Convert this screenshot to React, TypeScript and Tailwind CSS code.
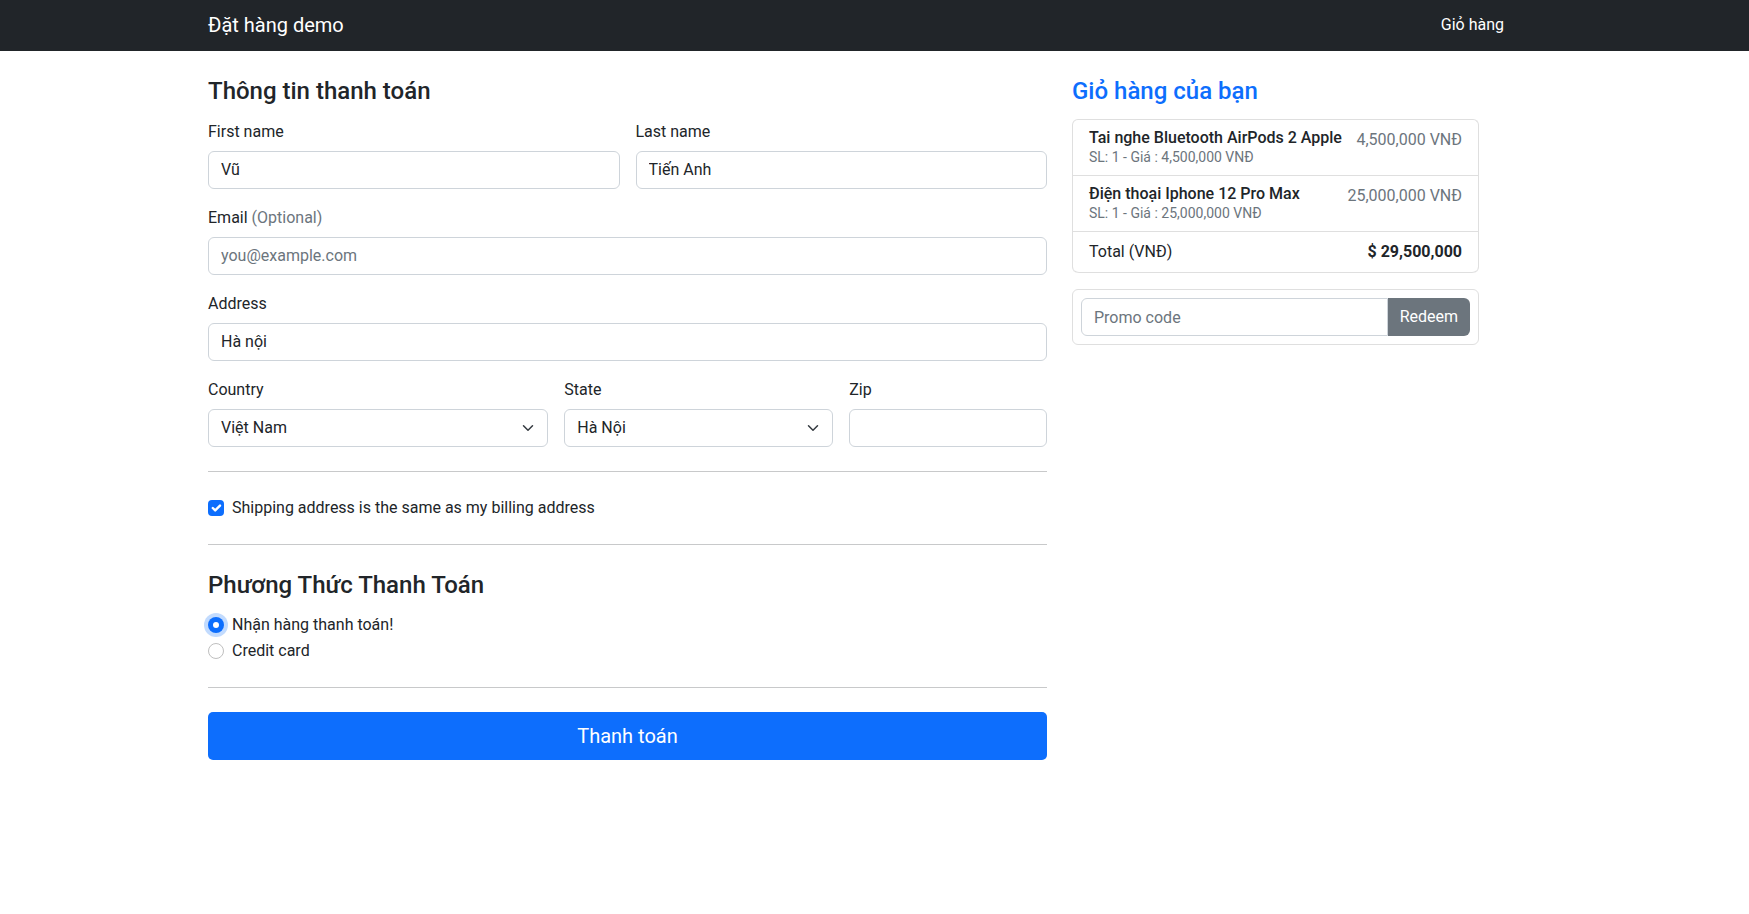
import { FC, ReactNode } from 'react'

const inputCls =
  'block w-full h-[38px] rounded-[6px] border border-[#ced4da] bg-white px-3 text-base text-[#212529] placeholder:text-[#6c757d] outline-none'

interface FieldProps {
  label: ReactNode
  children: ReactNode
  className?: string
}

const Field: FC<FieldProps> = ({ label, children, className }) => (
  <div className={className}>
    <label className="mb-[7px] block pt-px text-base leading-6 text-[#212529]">{label}</label>
    {children}
  </div>
)

const Select: FC<{ value: string }> = ({ value }) => (
  <div className="relative">
    <select defaultValue={value} className={inputCls + ' appearance-none pr-9'}>
      <option>{value}</option>
    </select>
    <svg
      className="pointer-events-none absolute right-3 top-1/2 -translate-y-1/2"
      width="16"
      height="12"
      viewBox="0 0 16 16"
    >
      <path d="m2 5 6 6 6-6" fill="none" stroke="#343a40" strokeWidth="2" strokeLinecap="round" strokeLinejoin="round" />
    </svg>
  </div>
)

interface CartItemProps {
  name: string
  price: string
}

const CartItem: FC<CartItemProps> = ({ name, price }) => (
  <li className="flex justify-between border-b border-[#dfdfdf] px-4 pb-[7px] pt-2">
    <div>
      <h6 className="text-base font-medium leading-[1.2] text-[#212529]">{name}</h6>
      <small className="block text-sm leading-[1.5] text-[#6c757d]">SL: 1 - Giá : {price}</small>
    </div>
    <span className="text-base leading-6 text-[#6c757d]">{price}</span>
  </li>
)

const Hr = () => <hr className="my-6 border-0 border-t border-[#c8c9ca]" />

export default function App() {
  return (
    <div className="min-h-screen bg-white font-[Roboto,'Liberation_Sans',sans-serif] text-[#212529]">
      <nav className="h-[51px] bg-[#212529]">
        <div className="ml-[208px] flex h-full w-[1296px] items-center justify-between pb-[2px]">
          <a className="text-xl leading-[30px] text-white">Đặt hàng demo</a>
          <a className="text-base leading-6 text-white">Giỏ hàng</a>
        </div>
      </nav>

      <main className="ml-[208px] flex gap-[25px] pt-[26px]">
        <div className="w-[839px]">
          <h4 className="mb-[13px] text-2xl font-medium leading-[1.2]">Thông tin thanh toán</h4>
          <form className="grid grid-cols-12 gap-4">
            <Field label="First name" className="col-span-6">
              <input className={inputCls} defaultValue="Vũ" />
            </Field>
            <Field label="Last name" className="col-span-6">
              <input className={inputCls} defaultValue="Tiến Anh" />
            </Field>
            <Field
              label={
                <>
                  Email <span className="text-[#6c757d]">(Optional)</span>
                </>
              }
              className="col-span-12"
            >
              <input className={inputCls} placeholder="you@example.com" />
            </Field>
            <Field label="Address" className="col-span-12">
              <input className={inputCls} defaultValue="Hà nội" />
            </Field>
            <Field label="Country" className="col-span-5">
              <Select value="Việt Nam" />
            </Field>
            <Field label="State" className="col-span-4">
              <Select value="Hà Nội" />
            </Field>
            <Field label="Zip" className="col-span-3">
              <input className={inputCls} />
            </Field>
          </form>

          <Hr />

          <div className="flex h-6 items-center gap-2">
            <span className="flex h-4 w-4 items-center justify-center rounded-[4px] bg-[#0d6efd]">
              <svg width="16" height="16" viewBox="0 0 20 20">
                <path d="m6 10 3 3 6-6" fill="none" stroke="#fff" strokeWidth="3" strokeLinecap="round" strokeLinejoin="round" />
              </svg>
            </span>
            <span className="text-base leading-6">Shipping address is the same as my billing address</span>
          </div>

          <Hr />

          <h4 className="mb-[13px] pt-[2px] text-2xl font-medium leading-[1.2]">Phương Thức Thanh Toán</h4>
          <div className="mb-[2px] flex h-6 items-center gap-2">
            <span className="flex h-4 w-4 items-center justify-center rounded-full bg-[#0d6efd] ring-4 ring-[#0d6efd]/25">
              <span className="h-[6px] w-[6px] rounded-full bg-white" />
            </span>
            <span className="text-base leading-6">Nhận hàng thanh toán!</span>
          </div>
          <div className="mb-[2px] flex h-6 items-center gap-2">
            <span className="h-4 w-4 rounded-full border border-[#bfbfbf] bg-white" />
            <span className="text-base leading-6">Credit card</span>
          </div>

          <Hr />

          <button className="h-12 w-full rounded-[5px] bg-[#0d6efd] text-xl leading-[30px] text-white">
            Thanh toán
          </button>
        </div>

        <div className="w-[407px]">
          <h4 className="mb-[13px] text-2xl font-medium leading-[1.2] text-[#0d6efd]">Giỏ hàng của bạn</h4>
          <ul className="mb-4 rounded-[6px] border border-b-0 border-[#dfdfdf]">
            <CartItem name="Tai nghe Bluetooth AirPods 2 Apple" price="4,500,000 VNĐ" />
            <CartItem name="Điện thoại Iphone 12 Pro Max" price="25,000,000 VNĐ" />
            <li className="flex justify-between rounded-b-[6px] border-b border-[#dfdfdf] px-4 py-2 leading-6">
              <span>Total (VNĐ)</span>
              <strong className="font-bold">$ 29,500,000</strong>
            </li>
          </ul>
          <div className="flex rounded-[6px] border border-[#dfdfdf] p-2">
            <input
              className="h-[38px] min-w-0 flex-1 rounded-l-[6px] border border-[#ced4da] px-3 text-base outline-none placeholder:text-[#6c757d]"
              placeholder="Promo code"
            />
            <button className="h-[38px] rounded-r-[6px] bg-[#6c757d] px-3 text-base text-white">Redeem</button>
          </div>
        </div>
      </main>
    </div>
  )
}
